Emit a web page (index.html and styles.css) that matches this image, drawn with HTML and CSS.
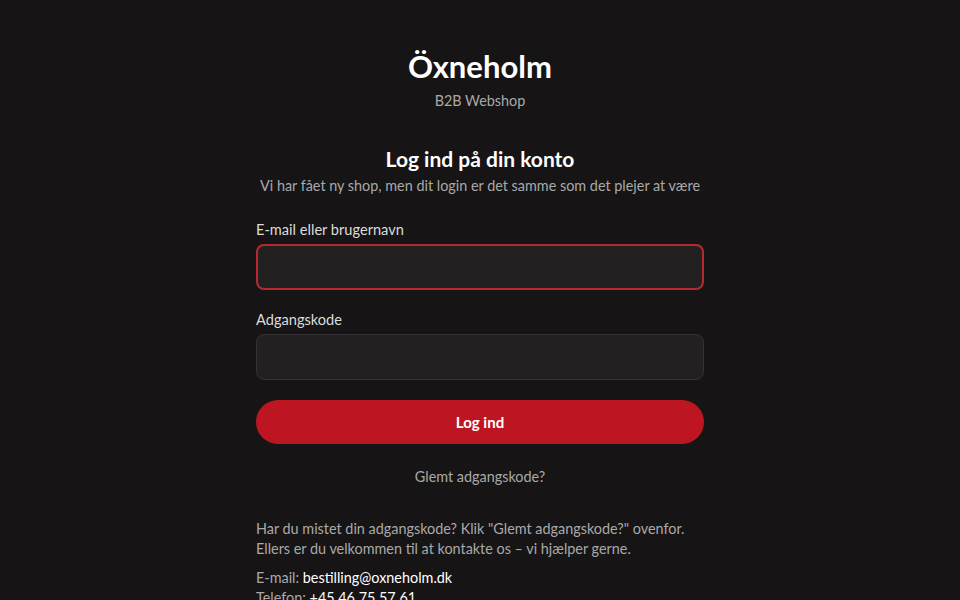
FILE: index.html
```html
<!DOCTYPE html>
<html lang="da">
<head>
<meta charset="utf-8">
<title>Öxneholm B2B Webshop</title>
<link rel="stylesheet" href="styles.css">
</head>
<body>
<main class="page">
  <header class="brand">
    <h1 class="brand-name">Öxneholm</h1>
    <p class="brand-sub">B2B Webshop</p>
  </header>
  <section class="login">
    <h2 class="login-title">Log ind på din konto</h2>
    <p class="login-sub">Vi har fået ny shop, men dit login er det samme som det plejer at være</p>
    <form class="form">
      <label class="field">
        <span class="field-label">E-mail eller brugernavn</span>
        <input class="field-input field-input--focus" type="text">
      </label>
      <label class="field">
        <span class="field-label">Adgangskode</span>
        <input class="field-input" type="password">
      </label>
      <button class="btn" type="button">Log ind</button>
    </form>
    <p class="forgot">Glemt adgangskode?</p>
    <div class="help">
      <p class="help-text">Har du mistet din adgangskode? Klik "Glemt adgangskode?" ovenfor.<br>Ellers er du velkommen til at kontakte os – vi hjælper gerne.</p>
      <p class="help-contact">E-mail: <span class="hl">bestilling@oxneholm.dk</span><br>Telefon: <span class="hl">+45 46 75 57 61</span></p>
    </div>
  </section>
</main>
</body>
</html>
```
FILE: styles.css
```css
* { box-sizing: border-box; }
html, body { margin: 0; padding: 0; }
body {
  background: #161415;
  color: #e8e8e8;
  font-family: Lato, "Open Sans", sans-serif;
  font-size: 14.4px;
}
.page {
  width: 448px;
  margin: 0 auto;
  padding-top: 46px;
}
.brand { text-align: center; }
.brand-name {
  margin: 0;
  font-size: 31px;
  font-weight: 700;
  line-height: 40px;
  color: #ffffff;
}
.brand-sub {
  margin: 5px 0 0;
  font-size: 14.4px;
  line-height: 20px;
  color: #a9a9a9;
}
.login { margin-top: 34px; }
.login-title {
  margin: 0;
  text-align: center;
  font-size: 21px;
  font-weight: 700;
  line-height: 28px;
  color: #ffffff;
}
.login-sub {
  margin: 3px 0 0;
  text-align: center;
  font-size: 14.4px;
  line-height: 20px;
  color: #a9a9a9;
}
.form {
  margin-top: 24px;
  display: flex;
  flex-direction: column;
  gap: 20px;
}
.field { display: flex; flex-direction: column; gap: 4px; }
.field-label {
  font-size: 14.6px;
  line-height: 20px;
  color: #dcdcdc;
}
.field-input {
  height: 46px;
  border-radius: 8px;
  border: 1px solid #343234;
  background: #222021;
  color: #fff;
  font: inherit;
  padding: 0 12px;
  outline: none;
}
.field-input--focus {
  border: 2px solid #b52a30;
}
.btn {
  height: 44px;
  border: 0;
  border-radius: 22px;
  background: #bd1622;
  color: #fff;
  font: inherit;
  font-weight: 700;
  font-size: 15px;
}
.forgot {
  margin: 23px 0 0;
  text-align: center;
  line-height: 20px;
  color: #a9a9a9;
}
.help { margin-top: 32px; color: #a9a9a9; line-height: 20px; }
.help-text { margin: 0; }
.help-contact { margin: 9px 0 0; }
.hl { color: #ffffff; }
```
